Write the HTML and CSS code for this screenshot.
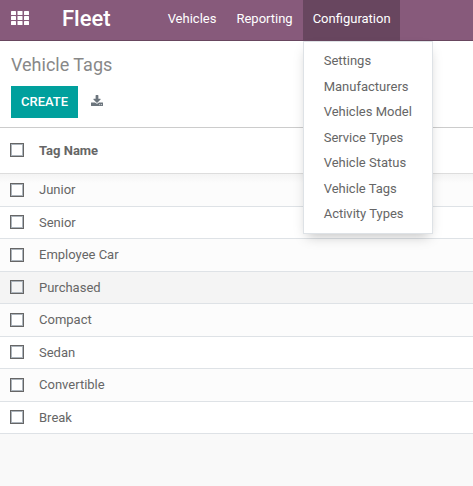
FILE: index.html
```html
<!DOCTYPE html>
<html lang="en">
<head>
<meta charset="utf-8">
<title>Fleet - Vehicle Tags</title>
<link rel="stylesheet" href="styles.css">
</head>
<body>
<header class="navbar">
  <button class="apps" type="button" aria-label="Applications">
    <svg width="18" height="14" viewBox="0 0 18 14" fill="currentColor" aria-hidden="true">
      <rect x="0" y="0" width="5" height="4" rx="0.6"/><rect x="6.5" y="0" width="5" height="4" rx="0.6"/><rect x="13" y="0" width="5" height="4" rx="0.6"/>
      <rect x="0" y="5" width="5" height="4" rx="0.6"/><rect x="6.5" y="5" width="5" height="4" rx="0.6"/><rect x="13" y="5" width="5" height="4" rx="0.6"/>
      <rect x="0" y="10" width="5" height="4" rx="0.6"/><rect x="6.5" y="10" width="5" height="4" rx="0.6"/><rect x="13" y="10" width="5" height="4" rx="0.6"/>
    </svg>
  </button>
  <a class="brand" href="#">Fleet</a>
  <nav class="sections">
    <a class="section" href="#">Vehicles</a>
    <a class="section" href="#">Reporting</a>
    <div class="dropdown">
      <a class="section active" href="#" aria-expanded="true">Configuration</a>
      <div class="menu">
        <a class="menu-item" href="#">Settings</a>
        <a class="menu-item" href="#">Manufacturers</a>
        <a class="menu-item" href="#">Vehicles Model</a>
        <a class="menu-item" href="#">Service Types</a>
        <a class="menu-item" href="#">Vehicle Status</a>
        <a class="menu-item" href="#">Vehicle Tags</a>
        <a class="menu-item" href="#">Activity Types</a>
      </div>
    </div>
  </nav>
</header>
<section class="control-panel">
  <h1 class="title">Vehicle Tags</h1>
  <div class="actions">
    <button class="create" type="button">Create</button>
    <button class="export" type="button" aria-label="Export all">
      <svg width="12" height="12" viewBox="0 0 1664 1664" fill="currentColor" aria-hidden="true">
        <path d="M1280 1344q0-26-19-45t-45-19-45 19-19 45 19 45 45 19 45-19 19-45zm256 0q0-26-19-45t-45-19-45 19-19 45 19 45 45 19 45-19 19-45zm128-224v320q0 40-28 68t-68 28h-1472q-40 0-68-28t-28-68v-320q0-40 28-68t68-28h465l135 136q58 56 136 56t136-56l136-136h464q40 0 68 28t28 68zm-325-569q17 41-14 70l-448 448q-18 19-45 19t-45-19l-448-448q-31-29-14-70 17-39 59-39h256v-448q0-26 19-45t45-19h256q26 0 45 19t19 45v448h256q42 0 59 39z"/>
      </svg>
    </button>
  </div>
</section>
<main>
  <table class="list">
    <thead>
      <tr><th class="select"><input class="check" type="checkbox" aria-label="Select all"></th><th>Tag Name</th></tr>
    </thead>
    <tbody>
      <tr><td class="select"><input class="check" type="checkbox" id="t1"></td><td><label for="t1">Junior</label></td></tr>
      <tr><td class="select"><input class="check" type="checkbox" id="t2"></td><td><label for="t2">Senior</label></td></tr>
      <tr><td class="select"><input class="check" type="checkbox" id="t3"></td><td><label for="t3">Employee Car</label></td></tr>
      <tr class="hovered"><td class="select"><input class="check" type="checkbox" id="t4"></td><td><label for="t4">Purchased</label></td></tr>
      <tr><td class="select"><input class="check" type="checkbox" id="t5"></td><td><label for="t5">Compact</label></td></tr>
      <tr><td class="select"><input class="check" type="checkbox" id="t6"></td><td><label for="t6">Sedan</label></td></tr>
      <tr><td class="select"><input class="check" type="checkbox" id="t7"></td><td><label for="t7">Convertible</label></td></tr>
      <tr><td class="select"><input class="check" type="checkbox" id="t8"></td><td><label for="t8">Break</label></td></tr>
    </tbody>
  </table>
</main>
</body>
</html>
```
FILE: styles.css
```css
* { box-sizing: border-box; }
body {
  margin: 0;
  background: #f9f9f9;
  color: #666;
  font-family: Roboto, "Liberation Sans", sans-serif;
  font-size: 13px;
  line-height: 1.5;
}
a { color: inherit; text-decoration: none; }
button { font: inherit; cursor: pointer; }

.navbar {
  display: flex;
  height: 41px;
  background: #875a7b;
  border-bottom: 1px solid #68465f;
  color: #fff;
}
.apps {
  display: flex;
  align-items: center;
  padding: 0 11px;
  padding-bottom: 4px;
  border: 0;
  background: none;
  color: inherit;
}
.brand {
  margin-left: 22px;
  margin-right: 47px;
  font-size: 22px;
  font-weight: 500;
  line-height: 37px;
}
.sections { display: flex; }
.section {
  display: block;
  height: 41px;
  padding: 0 10px;
  line-height: 38px;
}
.section.active { padding-right: 9px; background: #68465f; }
.dropdown { position: relative; }
.menu {
  position: absolute;
  z-index: 2;
  top: 100%;
  left: 0;
  margin-top: 1px;
  padding: 6px 0;
  background: #fff;
  border: 1px solid #dee2e6;
  box-shadow: 0 6px 12px -4px rgba(0, 0, 0, 0.25);
  color: #666;
  white-space: nowrap;
}
.menu-item { display: block; padding: 3px 20px; }

.control-panel {
  padding: 10px 11px 9px;
  background: #fff;
  border-bottom: 1px solid #ccc;
}
.title {
  margin: 0 0 8px;
  color: #888;
  font-size: 18px;
  font-weight: 400;
}
.actions { display: flex; align-items: center; gap: 13px; }
.create {
  padding: 5px 9px;
  border: 1px solid #00a09d;
  background: #00a09d;
  color: #fff;
  font-weight: 500;
  text-transform: uppercase;
}
.export { display: flex; padding: 0 0 2px; border: 0; background: none; color: #6c757d; }

.list { width: 100%; border-collapse: separate; border-spacing: 0; background: #fff; }
.list th, .list td {
  padding: 6px 0;
  border-bottom: 1px solid #dee2e6;
  text-align: left;
  vertical-align: middle;
}
.list th { padding: 13px 0; font-weight: 700; border-bottom-color: #ddd; }
.list .select { width: 39px; padding-left: 10px; line-height: 0; }
.list tbody tr:nth-child(odd) { background: #fcfcfc; }
.list tbody tr.hovered { background: #f4f4f4; }
.list tbody tr:first-child td { background: linear-gradient(#f4f4f4, #fcfcfc 9px); }
.check {
  appearance: none;
  width: 14px;
  height: 14px;
  margin: 0;
  border: 1px solid #666;
  background: #fff;
  box-shadow: inset 0 0 0 1px #adb5bd;
}
.hovered .check { background: #f4f4f4; }
```
